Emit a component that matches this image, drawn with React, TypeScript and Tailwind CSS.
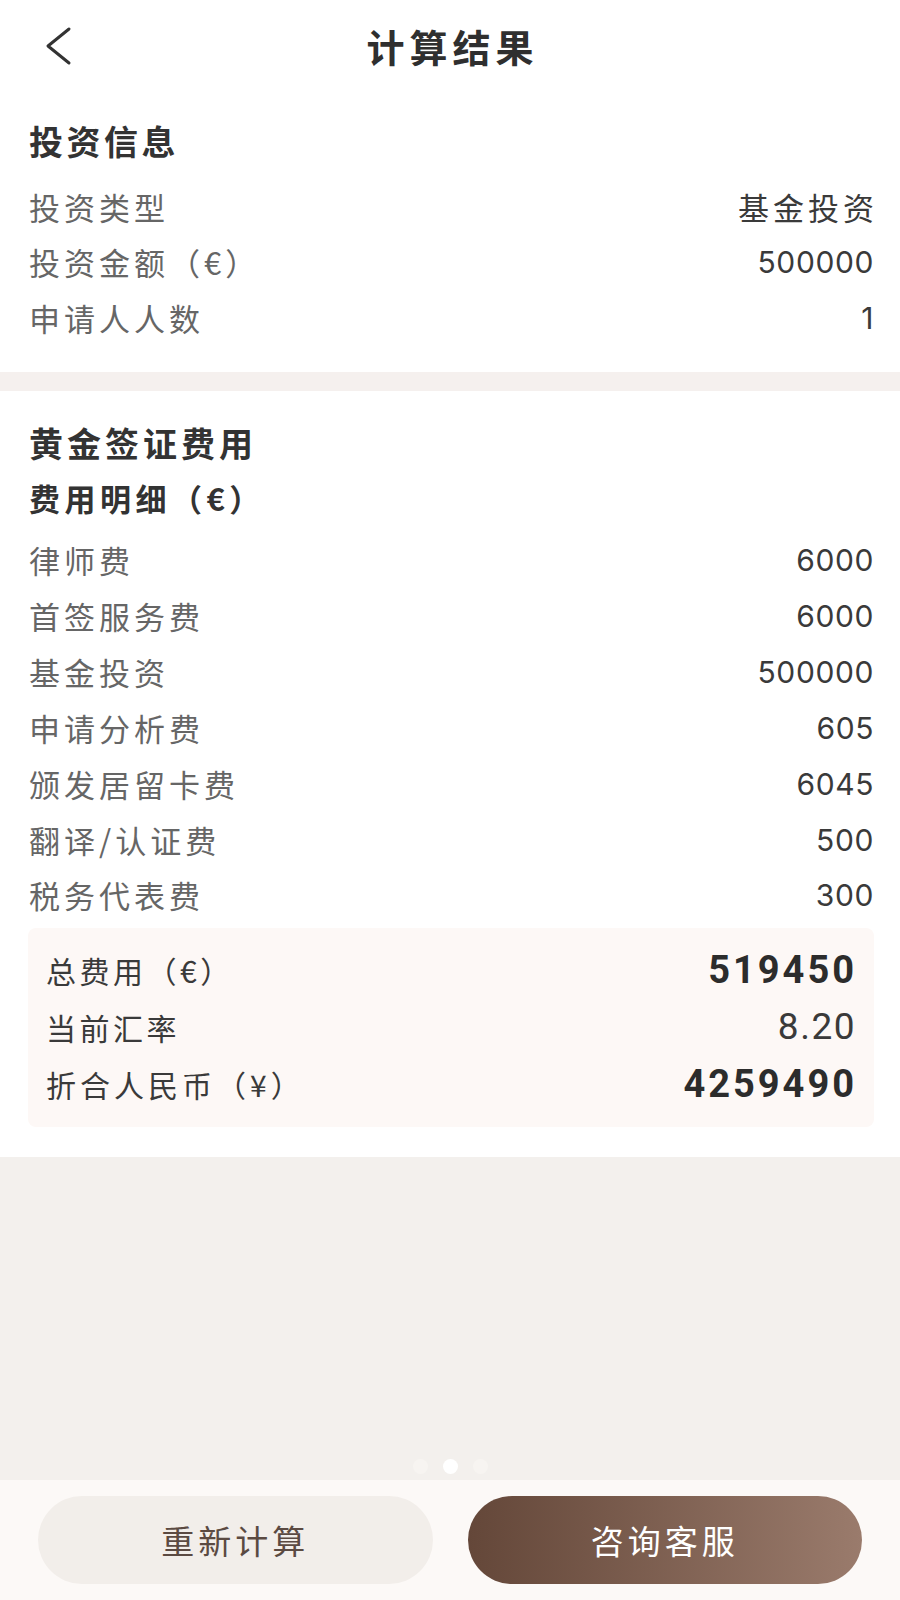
import React from 'react';

const cjk = { fontFamily: '"Noto Sans CJK SC", "Noto Sans", sans-serif' };
const num = { fontFamily: 'Inter, "Noto Sans CJK SC", sans-serif' };
const numBold = { fontFamily: 'Roboto, "Noto Sans CJK SC", sans-serif' };

const investRows = [
  { label: '投资类型', value: '基金投资', cjkValue: true },
  { label: '投资金额（€）', value: '500000' },
  { label: '申请人人数', value: '1' },
];

const feeRows = [
  { label: '律师费', value: '6000' },
  { label: '首签服务费', value: '6000' },
  { label: '基金投资', value: '500000' },
  { label: '申请分析费', value: '605' },
  { label: '颁发居留卡费', value: '6045' },
  { label: '翻译/认证费', value: '500' },
  { label: '税务代表费', value: '300' },
];

const Row: React.FC<{ label: string; value: string; cjkValue?: boolean; h?: string }> = ({ label, value, cjkValue, h }) => (
  <div className={`flex items-center justify-between ${h ?? 'h-[55.5px]'}`}>
    <span className="text-[31px] leading-[40px] tracking-[4px] text-[#666]" style={cjk}>
      {label}
    </span>
    <span
      className={
        cjkValue
          ? 'text-[31px] leading-[40px] tracking-[4px] text-[#3a3a3a] -mr-[4px]'
          : 'text-[30px] leading-[40px] tracking-[0.6px] text-[#3a3a3a]'
      }
      style={cjkValue ? cjk : num}
    >
      {value}
    </span>
  </div>
);

export default function App() {
  return (
    <div className="flex h-[1600px] w-full flex-col bg-[#f3f0ed]" style={cjk}>
      {/* header + investment info */}
      <div className="bg-white">
        <div className="grid h-[92px] grid-cols-[1fr_auto_1fr] items-center">
          <div className="pl-[44px]">
            <svg width="30" height="40" viewBox="0 0 30 40" fill="none">
              <path d="M25 3 L4 20 L25 37" stroke="#333" strokeWidth="3" strokeLinecap="round" strokeLinejoin="round" />
            </svg>
          </div>
          <h1 className="-mr-[5px] text-[38px] font-bold leading-[44px] tracking-[5px] text-[#2f2f2f]">计算结果</h1>
          <div />
        </div>
        <div className="pl-[29px] pr-[26px] pt-[29px] pb-[26px]">
          <h2 className="h-[40px] text-[34px] font-bold leading-[40px] tracking-[3.5px] text-[#333]">投资信息</h2>
          <div className="mt-[18px]">
            {investRows.map((r) => (
              <Row key={r.label} {...r} />
            ))}
          </div>
        </div>
      </div>

      <div className="h-[19px] bg-[#f5f0ee]" />

      {/* golden visa fees */}
      <div className="bg-white pl-[29px] pr-[26px] pt-[32px] pb-[30px]">
        <h2 className="h-[40px] text-[34px] font-bold leading-[40px] tracking-[4px] text-[#333]">黄金签证费用</h2>
        <h3 className="mt-[15px] h-[40px] text-[31px] font-bold leading-[40px] tracking-[4.5px] text-[#333]">费用明细（€）</h3>
        <div className="mt-[15px]">
          {feeRows.map((r) => (
            <Row key={r.label} {...r} h="h-[55.83px]" />
          ))}
        </div>

        <div className="-ml-px mt-[5px] rounded-[8px] bg-[#fdf8f6] pl-[18px] pr-[19px] pt-[13.5px] pb-[14.5px]">
          <div className="flex h-[57px] items-center justify-between">
            <span className="text-[30px] leading-[40px] tracking-[3.5px] text-[#3a3a3a]">总费用（€）</span>
            <span className="text-[38px] font-bold leading-[44px] tracking-[3px] text-[#2c2c2c] -mr-[2px]" style={numBold}>
              519450
            </span>
          </div>
          <div className="flex h-[57px] items-center justify-between">
            <span className="text-[30px] leading-[40px] tracking-[3.5px] text-[#3a3a3a]">当前汇率</span>
            <span className="text-[37px] leading-[44px] tracking-[1.5px] text-[#3a3a3a] -mr-[1px]" style={numBold}>
              8.20
            </span>
          </div>
          <div className="flex h-[57px] items-center justify-between">
            <span className="text-[30px] leading-[40px] tracking-[4px] text-[#3a3a3a]">折合人民币（¥）</span>
            <span className="text-[38px] font-bold leading-[44px] tracking-[3px] text-[#2c2c2c] -mr-[2px]" style={numBold}>
              4259490
            </span>
          </div>
        </div>
      </div>

      {/* empty area with pager dots */}
      <div className="flex flex-1 items-end justify-center gap-[15px] pb-[6px]">
        <span className="h-[15px] w-[15px] rounded-full bg-[#f7f4f1]" />
        <span className="h-[15px] w-[15px] rounded-full bg-white" />
        <span className="h-[15px] w-[15px] rounded-full bg-[#f7f4f1]" />
      </div>

      {/* bottom actions */}
      <div className="flex h-[120px] gap-[35px] bg-[#fcf9f7] px-[38px] pt-[16px]">
        <button className="h-[88px] flex-1 rounded-full bg-[#f2eeea] text-[33px] leading-[40px] tracking-[4px] text-[#5b4a42]">
          重新计算
        </button>
        <button className="h-[88px] flex-1 rounded-full bg-gradient-to-r from-[#644739] to-[#9a7b6c] text-[33px] leading-[40px] tracking-[4px] text-white">
          咨询客服
        </button>
      </div>
    </div>
  );
}
